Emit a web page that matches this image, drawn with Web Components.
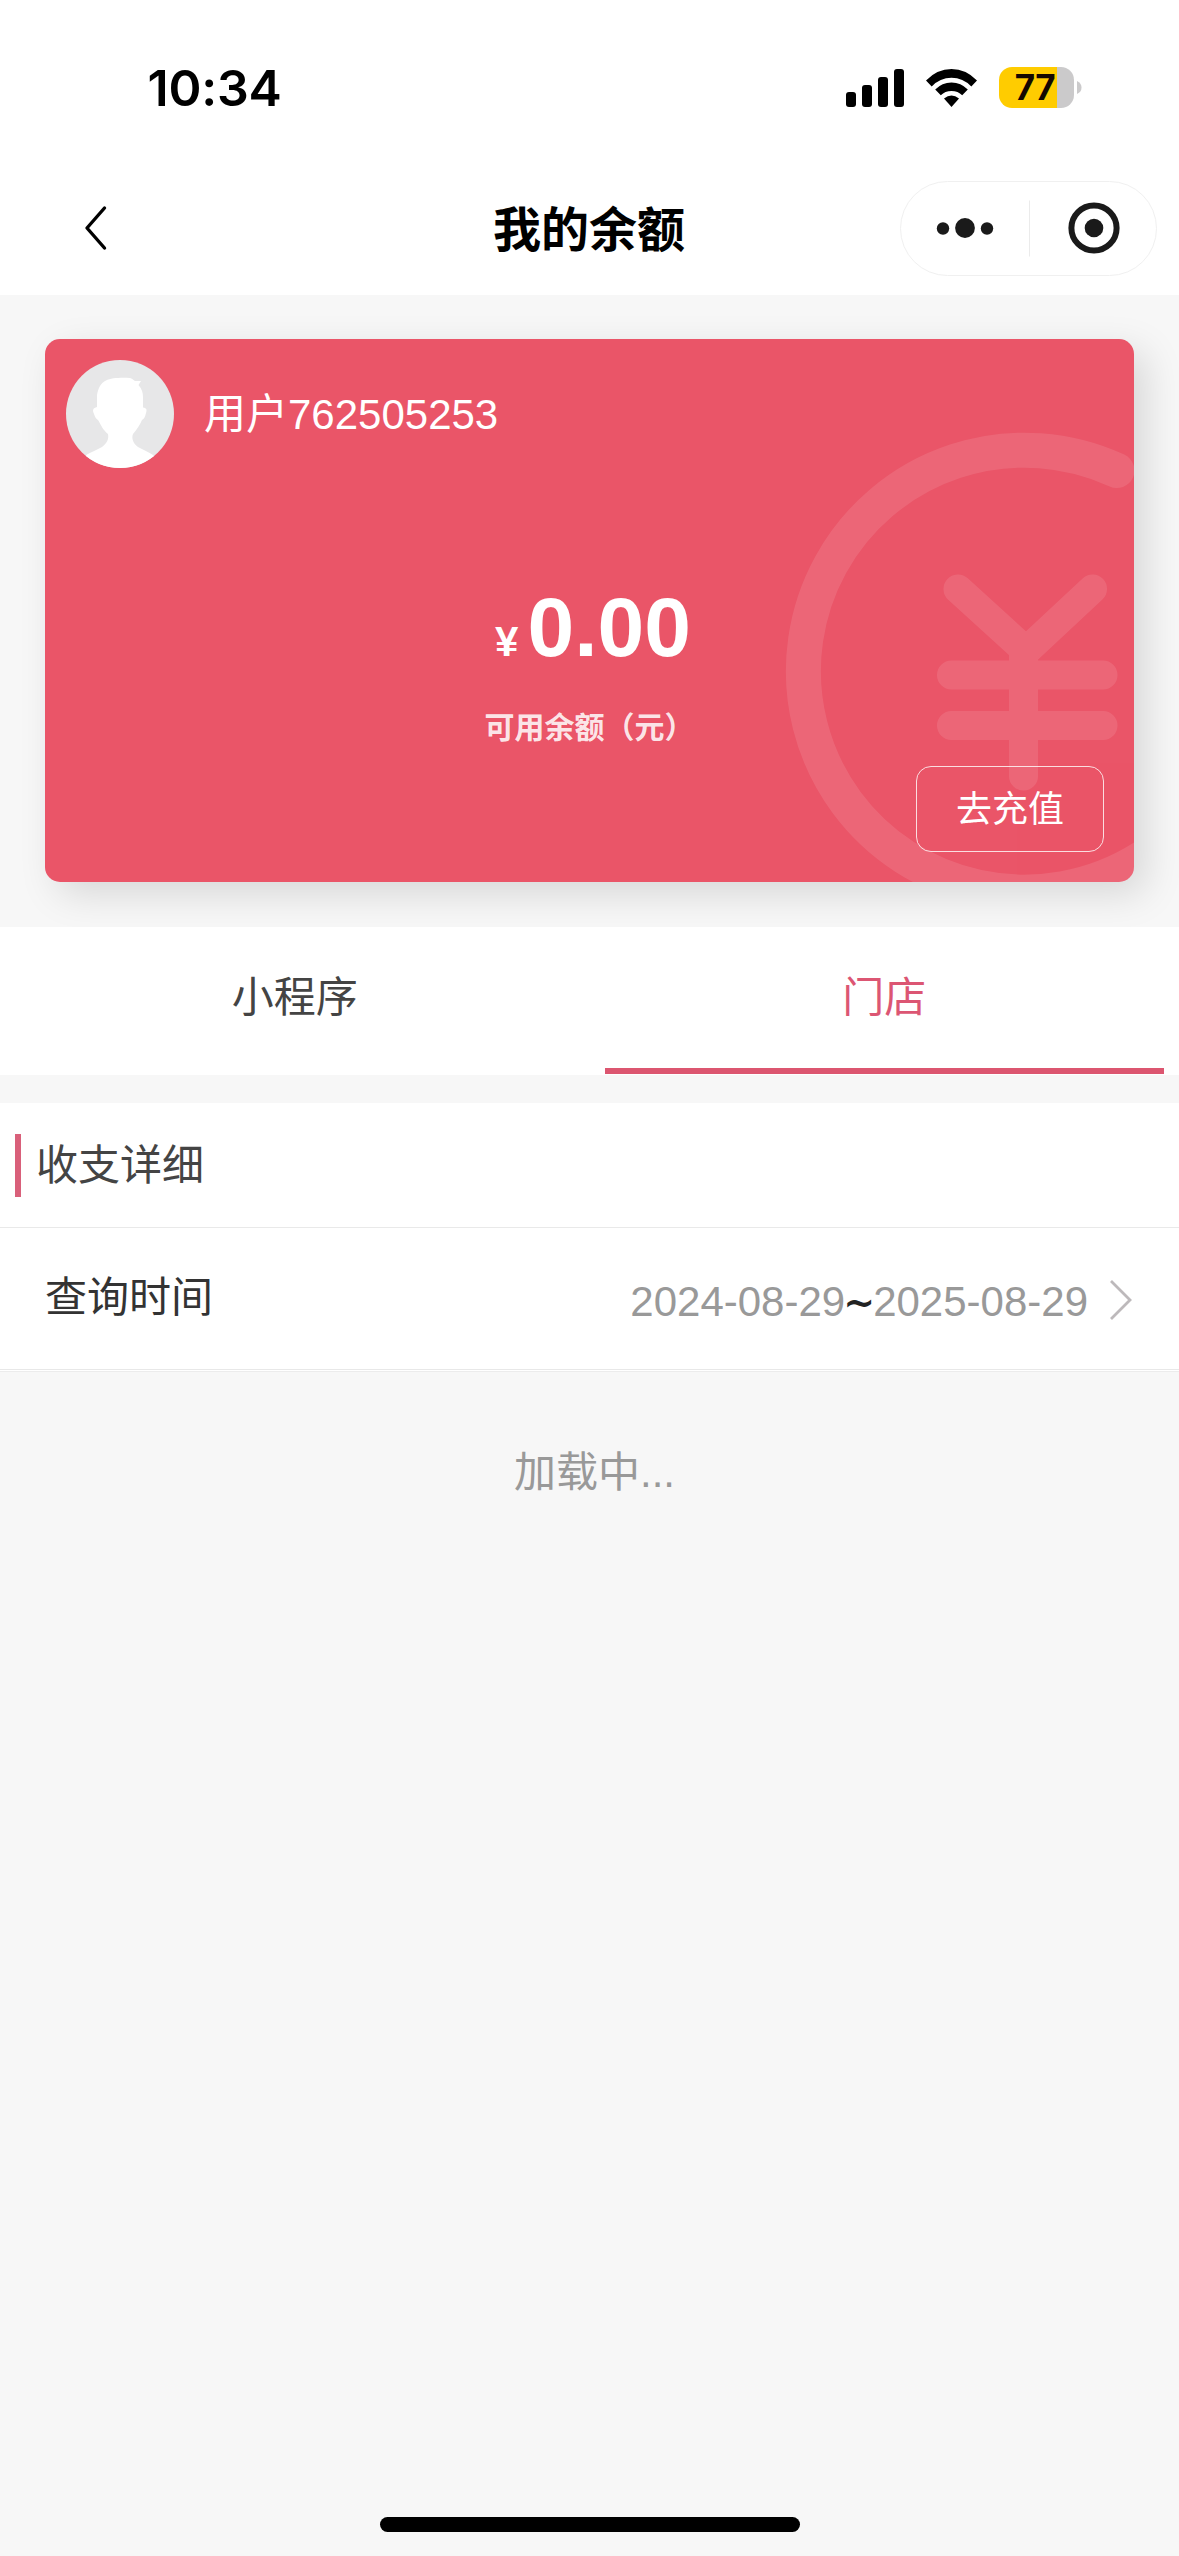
<!DOCTYPE html>
<html lang="zh-CN">
<head>
<meta charset="utf-8">
<title>我的余额</title>
<style>
html,body{margin:0;background:#f7f7f7}
body{font-family:"Liberation Sans","Noto Sans CJK SC",sans-serif;color:#333}
</style>
</head>
<body>
<balance-page>
  <status-bar slot="top" time="10:34" level="77"></status-bar>
  <nav-bar slot="top">我的余额</nav-bar>
  <balance-card user="用户762505253" amount="0.00" action="去充值">可用余额（元）</balance-card>
  <tab-strip><tab-item>小程序</tab-item><tab-item active>门店</tab-item></tab-strip>
  <section-title>收支详细</section-title>
  <date-row from="2024-08-29" to="2025-08-29">查询时间</date-row>
  <loading-note>加载中...</loading-note>
  <home-indicator slot="bottom"></home-indicator>
</balance-page>
<script>
const define = (name, render) => customElements.define(name, class extends HTMLElement {
  constructor() {
    super();
    this.attachShadow({ mode: 'open' });
  }
  connectedCallback() {
    this.shadowRoot.innerHTML = render(this);
  }
});

define('balance-page', () => `
<style>
:host{display:flex;flex-direction:column;width:1179px;height:2556px;overflow:hidden;background:#f7f7f7}
header{background:#fff;height:295px;flex:none}
main{flex:1;display:flex;flex-direction:column}
</style>
<header><slot name="top"></slot></header>
<main><slot></slot></main>
<slot name="bottom"></slot>`);

define('status-bar', el => `
<style>
:host{display:flex;height:175px;align-items:center;justify-content:space-between;padding:0 97px 0 147.500px;box-sizing:border-box;color:#000;font-family:Inter,sans-serif}
time{font-size:50px;font-weight:600;line-height:60px;letter-spacing:-.2px}
.right{display:flex;align-items:center}
.wifi{margin-left:22px}
.battery{margin-left:22px;width:75px;height:41px;border-radius:13px;background:linear-gradient(90deg,#fc0 58.3px,#cbcacb 58.3px);display:flex;align-items:center;justify-content:center;font-size:35px;font-weight:700;line-height:41px;letter-spacing:-.5px;color:#140800}
.battery span{margin-left:-3px}
.nub{margin-left:3px}
svg{display:block}
</style>
<time>${el.getAttribute('time')}</time>
<div class="right">
<svg width="58" height="38" viewBox="0 0 58 38"><rect y="23" width="10" height="15" rx="3"/><rect x="16" y="16" width="10" height="22" rx="3"/><rect x="32" y="8" width="10" height="30" rx="3"/><rect x="48" width="10" height="38" rx="3"/></svg>
<svg class="wifi" width="51" height="38" viewBox="0 0 51 38"><path d="M0 11.5Q11 0 25.500 0T51 11.500L45.300 17.500Q37 8.800 25.500 8.800T5.700 17.500Z"/><path d="M9.200 20.500Q16 13.400 25.500 13.400T41.800 20.500L36.200 26.300Q32 22 25.500 22T14.800 26.300Z"/><path d="M18 29.500Q25.500 23.500 33 29.500L25.500 38Z"/></svg>
<div class="battery"><span>${el.getAttribute('level')}</span></div>
<svg class="nub" width="5" height="13" viewBox="0 0 5 13"><path d="M0 0Q4.500 2 4.500 6.500T0 13Z" fill="#cbcacb"/></svg>
</div>`);

define('nav-bar', () => `
<style>
:host{display:grid;grid-template-columns:1fr auto 1fr;align-items:center;height:106px;padding:0 22px 0 81px;color:#000}
h1{margin:5px 60px 0 0;font-size:48px;line-height:60px;font-weight:600}
.capsule{justify-self:end;display:flex;align-items:center;width:257px;height:95px;box-sizing:border-box;border:1px solid #f0f0f0;border-radius:48px}
svg{display:block}
</style>
<svg width="28" height="46" viewBox="0 0 28 46"><path d="M23.500 3L6 23L23.500 43" fill="none" stroke="#000" stroke-width="3.400" stroke-linecap="round" stroke-linejoin="round"/></svg>
<h1><slot></slot></h1>
<div class="capsule"><svg width="255" height="93" viewBox="0 0 255 93" fill="#1a1a1a"><circle cx="42" cy="46.500" r="6.200"/><circle cx="64" cy="46" r="9.900"/><circle cx="86" cy="46.500" r="6.200"/><rect x="128" y="18.500" width="1" height="56" fill="#ebebeb"/><circle cx="193" cy="46" r="22.600" fill="none" stroke="#1a1a1a" stroke-width="6"/><circle cx="193" cy="46" r="9.300"/></svg></div>`);

define('balance-card', el => `
<style>
:host{display:grid;position:relative;width:1089px;height:543px;margin:44px 45px 45px;border-radius:15px;background:#ea5568;box-shadow:12px 12px 38px rgba(0,0,0,.13);color:#fff;flex:none}
.mark{position:absolute;inset:0;border-radius:15px}
.body{position:relative;display:flex;flex-direction:column;height:543px}
.user{display:flex;align-items:center;padding:21px 0 0 21px;gap:30px;font-size:42px;line-height:50px}
.user span{margin-top:2px}
.money{display:flex;align-items:baseline;justify-content:center;margin:111px 0 0 7px;gap:9px;font-weight:700;font-size:84px;line-height:96px}
.money small{font-size:42px}
.label{margin-top:18px;text-align:center;font-size:30px;line-height:40px;font-weight:600;color:rgba(255,255,255,.87)}
button{align-self:flex-end;margin:18px 30px 0 0;width:188px;height:86px;border:1.500px solid rgba(255,255,255,.8);border-radius:15px;background:none;color:#fff;font:36px/50px "Liberation Sans","Noto Sans CJK SC",sans-serif;padding:2px 0 0}
</style>
<svg class="mark" width="1089" height="543" viewBox="45 339 1089 543"><g opacity=".1" fill="none" stroke="#fff" stroke-linecap="round"><path d="M1117 470.500A221 221 0 1 0 1201 804" stroke-width="35"/><path d="M958 589L1026 651L1092.500 589M1023.500 652V776M951.500 675H1103M951.500 725.500H1103" stroke-width="29"/></g></svg>
<div class="body">
<div class="user"><svg width="108" height="108" viewBox="0 0 108 108"><defs><clipPath id="c"><circle cx="54" cy="54" r="54"/></clipPath></defs><g clip-path="url(#c)"><path fill="#e7e7e8" d="M0 0H108V108H0Z"/><path fill="#fff" d="M31 47L31 35C32 28 35 23 40 20.500C45 18 54 17.500 64 18C67 19 68 20.500 69 21L75 21L72.500 25C76 29 77 33 77 37V47.500C81 48 81 50 80 53C79 57 78 59 76 60C74 65 71 69 67 74C65 79 68 84 72 87C77 90 83 92 87 95L98 108H10L21 94.500C25 92 31 90 36 87C41 83 43 79 42 74C37 70 35 65 32 60C30 59 29 57 28 54C26 50 27 48 31 47Z"/></g></svg><span>${el.getAttribute('user')}</span></div>
<div class="money"><small>¥</small><span>${el.getAttribute('amount')}</span></div>
<div class="label"><slot></slot></div>
<button>${el.getAttribute('action')}</button>
</div>`);

define('tab-strip', () => `
<style>
:host{position:relative;display:flex;height:148px;background:#fff;flex:none}
</style><slot></slot>`);

define('tab-item', () => `
<style>
:host{flex:1;display:flex;flex-direction:column;align-items:center;justify-content:space-between;font-size:42px;line-height:60px;color:#444}
span{margin-top:41px}
i{align-self:stretch;height:6px;margin:0 15px 1px}
:host([active]){color:#dc5673}
:host([active]) i{background:#dc5670}
</style><span><slot></slot></span><i></i>`);

define('section-title', () => `
<style>
:host{display:flex;align-items:center;height:124px;margin-top:28px;padding-left:15px;background:#fff;border-bottom:1px solid #e9e9e9;font-size:42px;line-height:60px;color:#444;flex:none}
i{width:6px;height:63px;background:#d9607a;margin-right:15px}
span{margin-top:1px}
</style><i></i><span><slot></slot></span>`);

define('date-row', el => `
<style>
:host{display:flex;align-items:center;justify-content:space-between;height:141px;padding:0 47px 0 45px;background:#fff;border-bottom:1px solid #e8e8e8;box-shadow:0 1px #fff,0 2px #ececec;font-size:42px;line-height:60px;color:#333;flex:none}
.label{margin-top:-1px}
.range{display:flex;align-items:center;color:#999}
.range span{margin-top:6px}
.range b{width:28px;margin-top:6px;display:flex;justify-content:center;font:700 38px/60px "DejaVu Sans",sans-serif;color:#222}
svg{display:block;margin:3px 0 0 21px}
</style>
<span class="label"><slot></slot></span>
<div class="range"><span>${el.getAttribute('from')}</span><b>~</b><span>${el.getAttribute('to')}</span>
<svg width="23" height="42" viewBox="0 0 23 42"><path d="M2 2L21 21L2 40" fill="none" stroke="#bdb9bb" stroke-width="2.800"/></svg></div>`);

define('loading-note', () => `
<style>
:host{display:block;padding:73px 0 0 10px;text-align:center;font-size:42px;line-height:60px;color:#999}
</style><slot></slot>`);

define('home-indicator', () => `
<style>
:host{display:block;width:420px;height:15px;border-radius:8px;background:#000;margin:0 auto 24px;flex:none}
</style>`);
</script>
</body>
</html>
